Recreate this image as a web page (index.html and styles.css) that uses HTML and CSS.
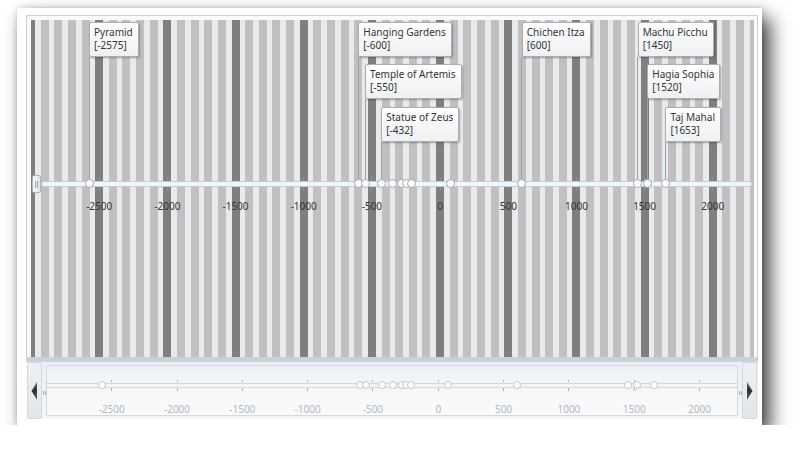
FILE: index.html
```html
<!DOCTYPE html>
<html>
<head>
<meta charset="utf-8">
<link rel="stylesheet" href="styles.css">
</head>
<body>
<div class="card">
  <div class="control">
    <div class="chart">
      <div class="plot">
        <div class="callout r1" style="left:58px"><div class="box">Pyramid<br>[-2575]</div></div>
        <div class="callout r1" style="left:327.3px"><div class="box">Hanging Gardens<br>[-600]</div></div>
        <div class="callout r2" style="left:334.1px"><div class="box">Temple of Artemis<br>[-550]</div></div>
        <div class="callout r3" style="left:350.2px"><div class="box">Statue of Zeus<br>[-432]</div></div>
        <div class="callout r1" style="left:490.8px"><div class="box">Chichen Itza<br>[600]</div></div>
        <div class="callout r1" style="left:606.7px"><div class="box">Machu Picchu<br>[1450]</div></div>
        <div class="callout r2" style="left:616.3px"><div class="box">Hagia Sophia<br>[1520]</div></div>
        <div class="callout r3" style="left:634.4px"><div class="box">Taj Mahal<br>[1653]</div></div>

        <div class="track"></div>

        <div class="tick" style="left:68.2px"></div>
        <div class="tick" style="left:136.4px"></div>
        <div class="tick" style="left:204.5px"></div>
        <div class="tick" style="left:272.7px"></div>
        <div class="tick" style="left:340.9px"></div>
        <div class="tick" style="left:409.1px"></div>
        <div class="tick" style="left:477.3px"></div>
        <div class="tick" style="left:545.5px"></div>
        <div class="tick" style="left:613.6px"></div>
        <div class="tick" style="left:681.8px"></div>

        <div class="event" style="left:58px"></div>
        <div class="event" style="left:327.3px"></div>
        <div class="event" style="left:334.1px"></div>
        <div class="event" style="left:350.2px"></div>
        <div class="event" style="left:361.7px"></div>
        <div class="event" style="left:370.7px"></div>
        <div class="event" style="left:375px"></div>
        <div class="event" style="left:380.6px"></div>
        <div class="event" style="left:419px"></div>
        <div class="event" style="left:490.8px"></div>
        <div class="event" style="left:606.7px"></div>
        <div class="event" style="left:616.3px"></div>
        <div class="event" style="left:634.4px"></div>

        <div class="label" style="left:68.2px">-2500</div>
        <div class="label" style="left:136.4px">-2000</div>
        <div class="label" style="left:204.5px">-1500</div>
        <div class="label" style="left:272.7px">-1000</div>
        <div class="label" style="left:340.9px">-500</div>
        <div class="label" style="left:409.1px">0</div>
        <div class="label" style="left:477.3px">500</div>
        <div class="label" style="left:545.5px">1000</div>
        <div class="label" style="left:613.6px">1500</div>
        <div class="label" style="left:681.8px">2000</div>

        <div class="thumb"></div>
      </div>
    </div>
    <div class="nav">
      <div class="nav-btn">
        <svg width="7" height="18" viewBox="0 0 7 18"><defs><linearGradient id="ga" x1="0" y1="0" x2="0" y2="1"><stop offset="0" stop-color="#5d6a77"/><stop offset="0.5" stop-color="#27313b"/><stop offset="1" stop-color="#5d6a77"/></linearGradient></defs><polygon points="0.5,9 6,0 6,18" fill="url(#ga)"/></svg>
      </div>
      <div class="grip"></div>
      <div class="panel">
        <div class="ntrack"></div>
        <div class="ntick" style="left:64.7px"></div>
        <div class="ntick" style="left:130px"></div>
        <div class="ntick" style="left:195.3px"></div>
        <div class="ntick" style="left:260.6px"></div>
        <div class="ntick" style="left:325.9px"></div>
        <div class="ntick" style="left:391.3px"></div>
        <div class="ntick" style="left:456.6px"></div>
        <div class="ntick" style="left:521.9px"></div>
        <div class="ntick" style="left:587.2px"></div>
        <div class="ntick" style="left:652.5px"></div>

        <div class="nevent" style="left:54.8px"></div>
        <div class="nevent" style="left:312.9px"></div>
        <div class="nevent" style="left:319.4px"></div>
        <div class="nevent" style="left:334.8px"></div>
        <div class="nevent" style="left:346px"></div>
        <div class="nevent" style="left:354.6px"></div>
        <div class="nevent" style="left:358.8px"></div>
        <div class="nevent" style="left:364.1px"></div>
        <div class="nevent" style="left:400.8px"></div>
        <div class="nevent" style="left:469.7px"></div>
        <div class="nevent" style="left:580.8px"></div>
        <div class="nevent" style="left:590px"></div>
        <div class="nevent" style="left:607.4px"></div>

        <div class="nlabel" style="left:64.7px">-2500</div>
        <div class="nlabel" style="left:130px">-2000</div>
        <div class="nlabel" style="left:195.3px">-1500</div>
        <div class="nlabel" style="left:260.6px">-1000</div>
        <div class="nlabel" style="left:325.9px">-500</div>
        <div class="nlabel" style="left:391.3px">0</div>
        <div class="nlabel" style="left:456.6px">500</div>
        <div class="nlabel" style="left:521.9px">1000</div>
        <div class="nlabel" style="left:587.2px">1500</div>
        <div class="nlabel" style="left:652.5px">2000</div>
      </div>
      <div class="grip"></div>
      <div class="nav-btn">
        <svg width="7" height="18" viewBox="0 0 7 18"><defs><linearGradient id="gb" x1="0" y1="0" x2="0" y2="1"><stop offset="0" stop-color="#5d6a77"/><stop offset="0.5" stop-color="#27313b"/><stop offset="1" stop-color="#5d6a77"/></linearGradient></defs><polygon points="6.5,9 1,0 1,18" fill="url(#gb)"/></svg>
      </div>
    </div>
  </div>
</div>
</body>
</html>
```

FILE: styles.css
```css
body {
  margin: 0;
  background: #fff;
  font-family: "Noto Sans", "DejaVu Sans", sans-serif;
}

.card {
  margin: 8px 0 0 17px;
  width: 745px;
  height: 417px;
  box-sizing: border-box;
  padding: 7px 4px 6px 9px;
  background: #fff;
  box-shadow: 0 0 6px rgba(0, 0, 0, 0.18), 8px 10px 18px rgba(0, 0, 0, 0.75);
}

.control {
  display: flex;
  flex-direction: column;
}

.chart {
  width: 732px;
  height: 347px;
  box-sizing: border-box;
  border: 1px solid #c8d0d8;
  border-bottom: 5px solid #c9d2db;
  padding: 4px 3px 0 4px;
  background: #f9fafb;
}

.plot {
  position: relative;
  height: 337px;
  overflow: hidden;
  background:
    repeating-linear-gradient(90deg, #7f7f7f 0 4px, transparent 4px 64.18px, #7f7f7f 64.18px 68.18px),
    repeating-linear-gradient(90deg, #c0c0c0 0 4px, #e8eaec 4px 9.636px, #c0c0c0 9.636px 13.636px);
}

/* callouts */
.callout {
  position: absolute;
  width: 0;
}
.callout.r1 { top: 2px; }
.callout.r2 { top: 44px; }
.callout.r3 { top: 87px; }

.callout::after {
  content: "";
  position: absolute;
  left: -0.5px;
  top: 35px;
  width: 1px;
  background: #9aa2aa;
}
.callout.r1::after { height: 122px; }
.callout.r2::after { height: 80px; }
.callout.r3::after { height: 37px; }

.box {
  position: absolute;
  left: 0;
  top: 0;
  height: 35px;
  box-sizing: border-box;
  padding: 3px 5px 0 4px;
  white-space: nowrap;
  font-size: 10px;
  line-height: 13px;
  color: #333;
  background: linear-gradient(#ffffff, #eef0f2);
  border: 1px solid #a6aeb7;
  border-radius: 2px;
  box-shadow: 1px 1px 2px rgba(0, 0, 0, 0.3);
  z-index: 2;
}

/* main axis */
.track {
  position: absolute;
  left: 10px;
  top: 161px;
  width: 711px;
  height: 6px;
  box-sizing: border-box;
  border: 1px solid #c3cdd8;
  border-radius: 3px;
  background: #f3f6f9;
}

.tick {
  position: absolute;
  top: 158px;
  width: 1px;
  height: 12px;
  margin-left: -0.5px;
  background: linear-gradient(#8d9cab 0 2px, transparent 2px 10px, #8d9cab 10px 12px);
}

.event {
  position: absolute;
  top: 159px;
  width: 9px;
  height: 9px;
  margin-left: -4.5px;
  box-sizing: border-box;
  border: 1px solid #9ea8b2;
  border-radius: 50%;
  background: #fff;
  z-index: 1;
}

.label {
  position: absolute;
  top: 180px;
  width: 50px;
  margin-left: -25px;
  text-align: center;
  font-size: 10px;
  line-height: 12px;
  color: #333;
}

.thumb {
  position: absolute;
  left: 1px;
  top: 155px;
  width: 9px;
  height: 18px;
  box-sizing: border-box;
  border: 1px solid #aab4be;
  border-radius: 2px;
  background: linear-gradient(90deg, #f7f9fb, #dfe5eb);
  display: flex;
  align-items: center;
  justify-content: center;
}
.thumb::after {
  content: "";
  width: 1px;
  height: 7px;
  border-left: 1px solid #9aa4ae;
  border-right: 1px solid #9aa4ae;
}

/* navigator */
.nav {
  margin-left: 1px;
  width: 731px;
  height: 57px;
  display: flex;
  background: linear-gradient(#eceef1, #f3f5f7);
}

.nav-btn {
  width: 15px;
  flex: none;
  box-sizing: border-box;
  border: 1px solid #d3d9df;
  border-radius: 2px;
  background: linear-gradient(#eef0f3, #e2e6ea);
  display: flex;
  align-items: center;
  justify-content: center;
}

.grip {
  width: 4px;
  flex: none;
  display: flex;
  align-items: center;
  justify-content: center;
  padding-top: 5px;
}
.grip:last-of-type { width: 5px; }
.grip::before {
  content: "";
  width: 1px;
  height: 4px;
  border-left: 1px solid #a8b0b8;
  border-right: 1px solid #a8b0b8;
}

.panel {
  position: relative;
  width: 692px;
  flex: none;
  margin: 3px 0;
  box-sizing: border-box;
  border: 1px solid #d3d9df;
  border-radius: 2px;
  background: linear-gradient(#eff2f4, #fafbfc);
}

.ntrack {
  position: absolute;
  left: 0;
  right: 0;
  top: 17px;
  height: 5px;
  box-sizing: border-box;
  border-top: 1px solid #d3d9e0;
  border-bottom: 1px solid #d3d9e0;
  background: #f3f5f7;
}

.ntick {
  position: absolute;
  top: 14px;
  width: 1px;
  height: 11px;
  margin-left: -0.5px;
  background: linear-gradient(#aab2ba 0 2px, transparent 2px 8px, #aab2ba 8px 10px);
}

.nevent {
  position: absolute;
  top: 15px;
  width: 8px;
  height: 8px;
  margin-left: -4px;
  box-sizing: border-box;
  border: 1px solid #c0c7ce;
  border-radius: 50%;
  background: #fff;
}

.nlabel {
  position: absolute;
  top: 37px;
  width: 50px;
  margin-left: -25px;
  text-align: center;
  font-size: 10px;
  line-height: 12px;
  color: #b3b8be;
}
```
